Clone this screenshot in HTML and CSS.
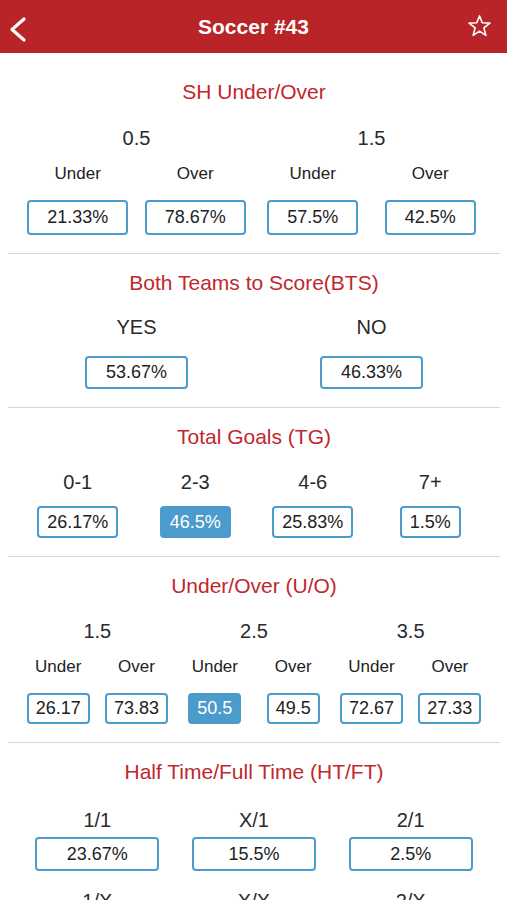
FILE: index.html
```html
<!DOCTYPE html>
<html>
<head>
<meta charset="utf-8">
<link rel="stylesheet" href="styles.css">
</head>
<body>
<header class="nav">
  <svg class="back" width="24" height="53" viewBox="0 0 24 53"><path d="M18 19 L6 29.5 L18 40" fill="none" stroke="#fff" stroke-width="3.2" stroke-linecap="round" stroke-linejoin="round"/></svg>
  <h1 class="nav-title">Soccer #43</h1>
  <svg class="star" width="23" height="23" viewBox="0 0 20 20"><polygon points="10,0.8 12.35,6.76 19.03,7.06 13.8,11.24 15.58,17.69 10,14 4.42,17.69 6.2,11.24 0.97,7.06 7.65,6.76" fill="none" stroke="#fff" stroke-width="1.4" stroke-linejoin="round"/></svg>
</header>
<main class="content">
  <section class="sec sec-sh">
    <h2 class="title">SH Under/Over</h2>
    <div class="grid g4">
      <div class="head span2">0.5</div>
      <div class="head span2">1.5</div>
      <div class="sub">Under</div>
      <div class="sub">Over</div>
      <div class="sub">Under</div>
      <div class="sub">Over</div>
      <div class="cell"><span class="box">21.33%</span></div>
      <div class="cell"><span class="box">78.67%</span></div>
      <div class="cell"><span class="box">57.5%</span></div>
      <div class="cell"><span class="box">42.5%</span></div>
    </div>
  </section>
  <section class="sec sec-bts">
    <h2 class="title">Both Teams to Score(BTS)</h2>
    <div class="grid g2">
      <div class="head">YES</div>
      <div class="head">NO</div>
      <div class="cell"><span class="box">53.67%</span></div>
      <div class="cell"><span class="box">46.33%</span></div>
    </div>
  </section>
  <section class="sec sec-tg">
    <h2 class="title">Total Goals (TG)</h2>
    <div class="grid g4">
      <div class="head">0-1</div>
      <div class="head">2-3</div>
      <div class="head">4-6</div>
      <div class="head">7+</div>
      <div class="cell"><span class="box">26.17%</span></div>
      <div class="cell"><span class="box on">46.5%</span></div>
      <div class="cell"><span class="box">25.83%</span></div>
      <div class="cell"><span class="box">1.5%</span></div>
    </div>
  </section>
  <section class="sec sec-uo">
    <h2 class="title">Under/Over (U/O)</h2>
    <div class="grid g6">
      <div class="head span2">1.5</div>
      <div class="head span2">2.5</div>
      <div class="head span2">3.5</div>
      <div class="sub">Under</div>
      <div class="sub">Over</div>
      <div class="sub">Under</div>
      <div class="sub">Over</div>
      <div class="sub">Under</div>
      <div class="sub">Over</div>
      <div class="cell"><span class="box">26.17</span></div>
      <div class="cell"><span class="box">73.83</span></div>
      <div class="cell"><span class="box on">50.5</span></div>
      <div class="cell"><span class="box">49.5</span></div>
      <div class="cell"><span class="box">72.67</span></div>
      <div class="cell"><span class="box">27.33</span></div>
    </div>
  </section>
  <section class="sec sec-ht">
    <h2 class="title">Half Time/Full Time (HT/FT)</h2>
    <div class="grid g3">
      <div class="head">1/1</div>
      <div class="head">X/1</div>
      <div class="head">2/1</div>
      <div class="cell"><span class="box">23.67%</span></div>
      <div class="cell"><span class="box">15.5%</span></div>
      <div class="cell"><span class="box">2.5%</span></div>
      <div class="head row2">1/X</div>
      <div class="head row2">X/X</div>
      <div class="head row2">2/X</div>
      <div class="cell"><span class="box">20.5%</span></div>
      <div class="cell"><span class="box">18.5%</span></div>
      <div class="cell"><span class="box">6.33%</span></div>
    </div>
  </section>
</main>
</body>
</html>
```
FILE: styles.css
```css
* { box-sizing: border-box; }
html, body { margin: 0; padding: 0; background: #fff; }
body {
  font-family: "Liberation Sans", Arial, sans-serif;
  color: #222;
  width: 507px;
  height: 900px;
  overflow: hidden;
}
.nav {
  height: 53px;
  background: #b82427;
  display: flex;
  align-items: flex-start;
  justify-content: space-between;
  padding: 0 16px 0 6px;
  position: relative;
}
.back { display: block; }
.star { display: block; margin-top: 15px; }
.nav-title {
  margin: 0;
  color: #fff;
  font-size: 21px;
  font-weight: bold;
  position: absolute;
  left: 0;
  right: 0;
  text-align: center;
  line-height: 53px;
  pointer-events: none;
}
.content {
  padding: 10px 7px 0 8px;
}
.sec {
  padding: 16px 11px 18px;
  border-bottom: 1px solid #d6d6d6;
}
.title {
  margin: 0;
  font-weight: normal;
  font-size: 21px;
  line-height: 26px;
  color: #c1272d;
  text-align: center;
}
.grid { display: grid; }
.g2 { grid-template-columns: repeat(2, 1fr); }
.g3 { grid-template-columns: repeat(3, 1fr); }
.g4 { grid-template-columns: repeat(4, 1fr); }
.g6 { grid-template-columns: repeat(6, 1fr); }
.span2 { grid-column: span 2; }
.head {
  text-align: center;
  font-size: 20px;
  line-height: 24px;
  color: #2a2a2a;
  margin-top: 20px;
}
.sub {
  text-align: center;
  font-size: 17px;
  line-height: 22px;
  color: #222;
  margin-top: 13px;
}
.cell {
  display: flex;
  justify-content: center;
}
.box {
  display: flex;
  align-items: center;
  justify-content: center;
  border: 2px solid #4b9bcc;
  border-radius: 4px;
  font-size: 18px;
  color: #222;
  background: #fff;
  white-space: nowrap;
}
.box.on {
  background: #4b9bcc;
  color: #fff;
}
.sec-sh .head { margin-top: 21px; }
.sec-sh .cell { margin-top: 15px; }
.sec-sh .box { height: 35px; padding: 0 18px; }
.sec-bts .head { margin-top: 19px; }
.sec-bts .cell { margin-top: 17px; }
.sec-bts .box { height: 33px; padding: 0 19px; }
.sec-tg .cell { margin-top: 12px; }
.sec-tg .box { height: 32px; padding: 0 8px; }
.sec-uo .cell { margin-top: 15px; }
.sec-uo .box { height: 31px; padding: 0 7px; }
.sec-ht .head { margin-top: 23px; }
.sec-ht .head.row2 { margin-top: 18px; }
.sec-ht .cell { margin-top: 5px; }
.sec-ht .box { height: 34px; width: 124px; }
```
